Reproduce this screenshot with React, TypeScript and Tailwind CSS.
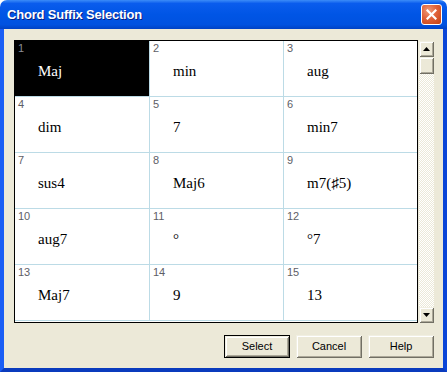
const chords = [
  "Maj",
  "min",
  "aug",
  "dim",
  "7",
  "min7",
  "sus4",
  "Maj6",
  "m7(♯5)",
  "aug7",
  "°",
  "°7",
  "Maj7",
  "9",
  "13",
];

const raised =
  "bg-[#ece9d8] shadow-[inset_1px_1px_#f1efe2,inset_-1px_-1px_#716f64,inset_2px_2px_#ffffff,inset_-2px_-2px_#aca899]";

function Arrow({ up }: { up?: boolean }) {
  return (
    <svg width="7" height="4" viewBox="0 0 7 4">
      {up ? <path d="M3.5 0 L7 4 L0 4 Z" fill="#000" /> : <path d="M0 0 L7 0 L3.5 4 Z" fill="#000" />}
    </svg>
  );
}

function Cell({ n, label, selected }: { n: number; label: string; selected?: boolean }) {
  const col = (n - 1) % 3;
  return (
    <div
      className={
        "h-[56px] border-b border-[#bcdbe6] flex flex-col " +
        (col < 2 ? "border-r " : "") +
        (selected ? "bg-black text-white" : "bg-white text-black")
      }
    >
      <div
        className={
          "pt-[1px] pl-[3px] h-[14px] text-[11px] leading-[13px] font-['Liberation_Sans',Arial,sans-serif] " +
          (selected ? "text-[#8c8c96]" : "text-[#5e5e66]")
        }
      >
        {n}
      </div>
      <div className="mt-[8px] pl-[23px] text-[15px] leading-[17px] font-['Liberation_Serif','Times_New_Roman',serif]">
        {label}
      </div>
    </div>
  );
}

function DlgButton({ label, def }: { label: string; def?: boolean }) {
  return (
    <div
      className={
        "w-[66px] h-[23px] flex items-center justify-center text-[11px] leading-[13px] text-black font-['Liberation_Sans',Tahoma,sans-serif] " +
        raised +
        (def ? " border border-black" : "")
      }
    >
      {label}
    </div>
  );
}

export default function App() {
  return (
    <div className="w-[447px] h-[372px] flex flex-col bg-white select-none">
      {/* title bar */}
      <div className="h-[29px] rounded-t-[7px] flex items-center pl-[7px] pr-[5px] bg-[linear-gradient(180deg,#3c8cf8_0%,#0a5ced_12%,#0055e5_50%,#0052e0_85%,#0042c4_100%)]">
        <span className="flex-1 text-white font-bold text-[13px] tracking-[-0.2px] font-['Liberation_Sans',Arial,sans-serif] [text-shadow:1px_1px_#0a1e80]">
          Chord Suffix Selection
        </span>
        <div className="w-[21px] h-[21px] rounded-[3px] border border-white flex items-center justify-center bg-[radial-gradient(circle_at_35%_30%,#f09a78_0%,#e0623a_45%,#c4400f_100%)]">
          <svg width="11" height="11" viewBox="0 0 11 11">
            <path d="M1.5 1.5 L9.5 9.5 M9.5 1.5 L1.5 9.5" stroke="#fff" strokeWidth="2.2" strokeLinecap="square" />
          </svg>
        </div>
      </div>

      {/* client */}
      <div className="flex-1 flex flex-col bg-[#ece9d8] border-l-4 border-r-4 border-b-4 border-l-[#1a5ef5] border-r-[#0a45d8] border-b-[#0a3bbd] pl-[10px] pr-[9px] pt-[11px]">
        <div className="flex items-start gap-[1px]">
          <div className="w-[404px] h-[283px] border border-black bg-white overflow-hidden">
            <div className="grid grid-cols-[135px_134px_133px]">
              {chords.map((c, i) => (
                <Cell key={i} n={i + 1} label={c} selected={i === 0} />
              ))}
            </div>
          </div>
          <div className="mt-[1px] w-[15px] h-[282px] flex flex-col bg-[repeating-conic-gradient(#ece9d8_0_25%,#ffffff_0_50%)] bg-[length:2px_2px]">
            <div className={"h-[16px] flex items-center justify-center " + raised}>
              <Arrow up />
            </div>
            <div className={"h-[17px] " + raised} />
            <div className="flex-1" />
            <div className={"h-[16px] flex items-center justify-center " + raised}>
              <Arrow />
            </div>
          </div>
        </div>

        <div className="mt-[12px] flex justify-end gap-[6px]">
          <DlgButton label="Select" def />
          <DlgButton label="Cancel" />
          <DlgButton label="Help" />
        </div>
      </div>
    </div>
  );
}
